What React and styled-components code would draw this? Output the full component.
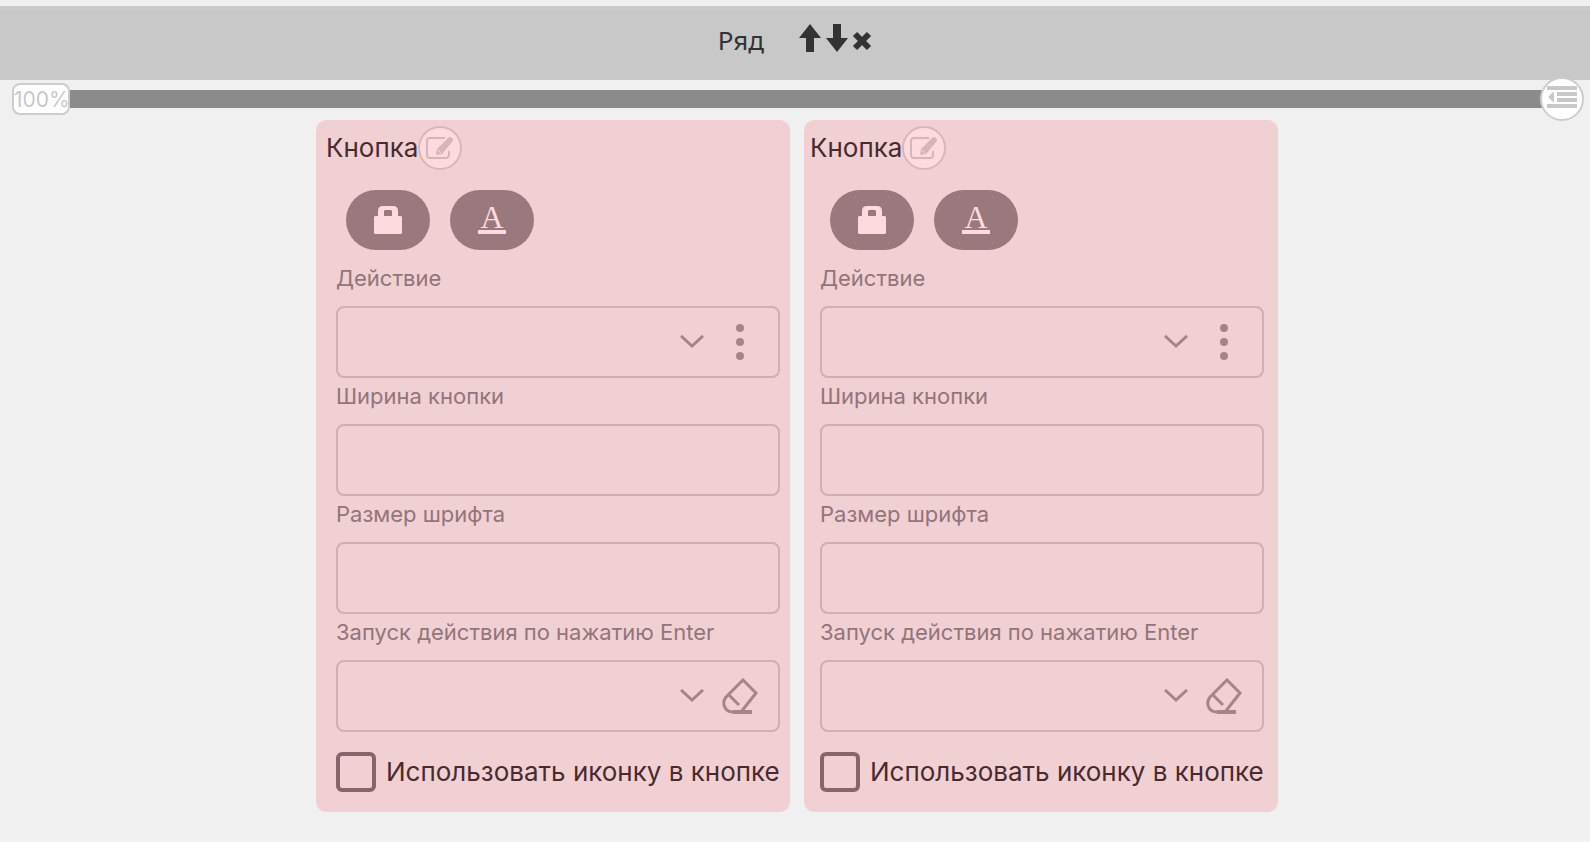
import React, { useId } from "react";
import styled, { createGlobalStyle } from "styled-components";

const GlobalStyle = createGlobalStyle`
  *, *::before, *::after { box-sizing: border-box; }
  body {
    margin: 0;
    background: #f0f0f0;
    font-family: Inter, "Liberation Sans", sans-serif;
    color: #333;
  }
  button, input, select { font: inherit; color: inherit; }
  button { cursor: pointer; }
`;

const Page = styled.main`
  padding: 6px 0 30px;
`;

const RowHeader = styled.header`
  display: flex;
  align-items: flex-start;
  justify-content: center;
  gap: 34px;
  height: 74px;
  padding-top: 14px;
  border-top: 4px solid #cbcbcb;
  background: #c8c8c8;
`;

const RowTitle = styled.h1`
  margin: 0;
  font-family: "Noto Sans", sans-serif;
  font-size: 26px;
  line-height: 32px;
  font-weight: 400;
`;

const RowActions = styled.div`
  display: flex;
  gap: 3px;
`;

const RowAction = styled.button`
  display: flex;
  padding: 0;
  border: 0;
  background: none;
  color: #333;
`;

const WidthBar = styled.div`
  display: flex;
  align-items: center;
  height: 42px;
  margin-top: -2px;
  padding: 0 6px 0 12px;
`;

const WidthInput = styled.input`
  width: 58px;
  height: 32px;
  padding: 0;
  border: 2px solid #ccc;
  border-radius: 8px;
  background: #fff;
  color: #c8c8c8;
  font-size: 21px;
`;

const Track = styled.div`
  flex: 1;
  height: 18px;
  margin-right: -20px;
  background: #8b8b8b;
`;

const RoundButton = styled.button`
  position: relative;
  display: flex;
  align-items: center;
  justify-content: center;
  flex: none;
  width: 44px;
  height: 44px;
  padding: 0;
  border: 2px solid ${(p) => (p.$pink ? "#d7b7ba" : "#ccc")};
  border-radius: 50%;
  background: ${(p) => (p.$pink ? "#fddade" : "#fff")};
  color: ${(p) => (p.$pink ? "#d5b5b8" : "#c8c8c8")};
`;

const Cards = styled.div`
  display: flex;
  justify-content: center;
  gap: 14px;
  padding-left: 4px;
`;

const Card = styled.section`
  width: 474px;
  padding: 6px 14px 20px 16px;
  border-radius: 10px;
  background: #f0d0d3;
  color: #4a2a2f;

  &:first-child {
    padding-left: 20px;
    padding-right: 10px;
  }
`;

const CardHead = styled.div`
  display: flex;
  align-items: center;
  margin-left: -10px;
`;

const CardTitle = styled.h2`
  margin: 0;
  font-size: 26px;
  line-height: 32px;
  font-weight: 400;
`;

const Pills = styled.div`
  display: flex;
  gap: 20px;
  padding: 20px 10px 10px;
`;

const Pill = styled.button`
  display: flex;
  align-items: center;
  justify-content: center;
  width: 84px;
  height: 60px;
  padding: 0;
  border: 0;
  border-radius: 30px;
  background: #99797d;
  color: #fddade;
`;

const Letter = styled.span`
  width: 28px;
  height: 28px;
  border-bottom: 4px solid currentColor;
  font-family: "Liberation Serif", serif;
  font-size: 32px;
  line-height: 23px;
  text-align: center;
`;

const FieldLabel = styled.label`
  display: block;
  height: 46px;
  padding-top: 4px;
  color: #93747a;
  font-size: 22px;
  line-height: 28px;
`;

const TextField = styled.input`
  display: block;
  width: 100%;
  height: 72px;
  padding: 0 16px;
  border: 2px solid #cfafb2;
  border-radius: 8px;
  background: transparent;
  font-size: 22px;
`;

const SelectBox = styled.div`
  display: grid;
  grid-template-columns: 1fr 40px 40px 10px;
  align-items: center;
  justify-items: center;
  column-gap: 8px;
  height: 72px;
  border: 2px solid #cfafb2;
  border-radius: 8px;
  color: #a68589;

  & > select, & > svg { grid-row: 1; }
  & > svg { grid-column: 2; pointer-events: none; }
`;

const Select = styled.select`
  grid-column: 1 / 3;
  width: 100%;
  height: 68px;
  padding: 0 16px;
  border: 0;
  background: transparent;
  appearance: none;
  font-size: 22px;
`;

const FieldAction = styled.button`
  grid-column: 3;
  grid-row: 1;
  display: flex;
  padding: 0;
  border: 0;
  background: none;
`;

const CheckRow = styled.label`
  display: flex;
  align-items: center;
  gap: 10px;
  margin-top: 20px;
  font-size: 26px;
  line-height: 40px;
  white-space: nowrap;
`;

const CheckBox = styled.input`
  flex: none;
  width: 40px;
  height: 40px;
  margin: 0;
  border: 4px solid #86666b;
  border-radius: 6px;
  appearance: none;

  &:checked { background: #86666b; }
`;

const ArrowIcon = ({ down }) => (
  <svg width="24" height="28" viewBox="0 0 24 28" fill="currentColor" aria-hidden="true">
    <path d={down ? "M8 0h8v14h7L12 28 1 14h7z" : "M8 28h8V14h7L12 0 1 14h7z"} />
  </svg>
);

const RemoveIcon = () => (
  <svg width="20" height="34" viewBox="0 0 20 34" fill="none" stroke="currentColor" strokeWidth="6" aria-hidden="true">
    <path d="M3 10l14 14M17 10L3 24" />
  </svg>
);

const OutdentIcon = () => (
  <svg width="30" height="26" viewBox="0 0 30 26" fill="currentColor" aria-hidden="true">
    <path d="M0 0h30v4H0zM10 6h20v4H10zM10 12h20v4H10zM0 18h30v4H0zM7 6v10H6L1 11l5-5z" />
  </svg>
);

const EditIcon = () => (
  <svg width="28" height="24" viewBox="0 0 28 24" fill="none" stroke="currentColor" strokeWidth="2" aria-hidden="true">
    <path d="M19 2H4a3 3 0 0 0-3 3v14a3 3 0 0 0 3 3h16a3 3 0 0 0 3-3v-4" />
    <path d="M10 19l1-6L22 2q2-2 4 0t0 4L16 18z" fill="currentColor" stroke="none" />
    <path d="M12 14l3 3" stroke="#fddade" strokeWidth="1" />
  </svg>
);

const LockIcon = () => (
  <svg width="28" height="28" viewBox="0 0 28 28" fill="currentColor" aria-hidden="true">
    <path fillRule="evenodd" d="M1 10h3V5q0-5 5-5h10q5 0 5 5v5h3l1 1v16l-1 1H1l-1-1V11zM10 5v5h8V5l-1-1h-6z" />
  </svg>
);

const ChevronIcon = () => (
  <svg width="24" height="14" viewBox="0 0 24 14" fill="none" stroke="currentColor" strokeWidth="3" aria-hidden="true">
    <path d="M1 1l11 10L23 1" />
  </svg>
);

const DotsIcon = () => (
  <svg width="8" height="36" viewBox="0 0 8 36" fill="currentColor" aria-hidden="true">
    <circle cx="4" cy="4" r="4" />
    <circle cx="4" cy="18" r="4" />
    <circle cx="4" cy="32" r="4" />
  </svg>
);

const EraserIcon = () => (
  <svg width="36" height="36" viewBox="0 0 36 36" fill="none" stroke="currentColor" strokeWidth="3" aria-hidden="true">
    <path d="M19 34L34 15 21 2 5 18C-1 24 2 34 11 34H19M7 17l10 10" />
    <path d="M11 34H30" strokeWidth="4" />
  </svg>
);

function SelectField({ label, action, children }) {
  const id = useId();
  return (
    <>
      <FieldLabel htmlFor={id}>{label}</FieldLabel>
      <SelectBox>
        <Select id={id} defaultValue="">
          <option value="" />
        </Select>
        <ChevronIcon />
        <FieldAction type="button" aria-label={action}>{children}</FieldAction>
      </SelectBox>
    </>
  );
}

function InputField({ label }) {
  const id = useId();
  return (
    <>
      <FieldLabel htmlFor={id}>{label}</FieldLabel>
      <TextField id={id} type="text" />
    </>
  );
}

function ButtonCard() {
  return (
    <Card>
      <CardHead>
        <CardTitle>Кнопка</CardTitle>
        <RoundButton type="button" $pink aria-label="Редактировать"><EditIcon /></RoundButton>
      </CardHead>
      <Pills>
        <Pill type="button" aria-label="Блокировка"><LockIcon /></Pill>
        <Pill type="button" aria-label="Цвет текста"><Letter>A</Letter></Pill>
      </Pills>
      <SelectField label="Действие" action="Ещё"><DotsIcon /></SelectField>
      <InputField label="Ширина кнопки" />
      <InputField label="Размер шрифта" />
      <SelectField label="Запуск действия по нажатию Enter" action="Очистить"><EraserIcon /></SelectField>
      <CheckRow>
        <CheckBox type="checkbox" />
        Использовать иконку в кнопке
      </CheckRow>
    </Card>
  );
}

export default function App() {
  return (
    <>
      <GlobalStyle />
      <Page>
        <RowHeader>
          <RowTitle>Ряд</RowTitle>
          <RowActions>
            <RowAction type="button" aria-label="Вверх"><ArrowIcon /></RowAction>
            <RowAction type="button" aria-label="Вниз"><ArrowIcon down /></RowAction>
            <RowAction type="button" aria-label="Удалить"><RemoveIcon /></RowAction>
          </RowActions>
        </RowHeader>
        <WidthBar>
          <WidthInput aria-label="Ширина" defaultValue="100%" />
          <Track />
          <RoundButton type="button" aria-label="Отступ"><OutdentIcon /></RoundButton>
        </WidthBar>
        <Cards>
          <ButtonCard />
          <ButtonCard />
        </Cards>
      </Page>
    </>
  );
}
